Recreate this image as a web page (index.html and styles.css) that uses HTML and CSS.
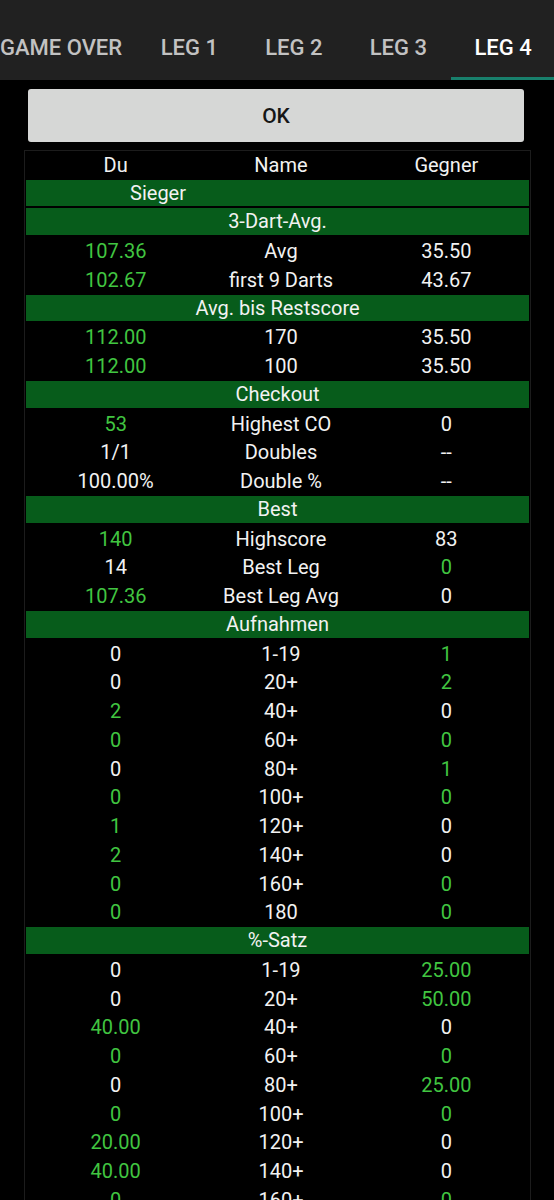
FILE: index.html
```html
<!DOCTYPE html>
<html lang="de">
<head>
  <meta charset="UTF-8">
  <meta name="viewport" content="width=device-width, initial-scale=1.0">
  <title>Statistik</title>
  <link rel="stylesheet" href="styles.css">
</head>
<body>
  <nav class="tabs">
    <div class="tab tab-first">GAME OVER</div>
    <div class="tab">LEG 1</div>
    <div class="tab">LEG 2</div>
    <div class="tab">LEG 3</div>
    <div class="tab tab-active">LEG 4</div>
  </nav>

  <main class="content">
    <button class="btn-ok">OK</button>

    <section class="stats">
      <div class="row head"><span>Du</span><span>Name</span><span>Gegner</span></div>
      <div class="row sec sieger"><span>Sieger</span></div>

      <div class="row sec"><span>3-Dart-Avg.</span></div>
      <div class="row"><span class="win">107.36</span><span>Avg</span><span>35.50</span></div>
      <div class="row"><span class="win">102.67</span><span>first 9 Darts</span><span>43.67</span></div>

      <div class="row sec"><span>Avg. bis Restscore</span></div>
      <div class="row"><span class="win">112.00</span><span>170</span><span>35.50</span></div>
      <div class="row"><span class="win">112.00</span><span>100</span><span>35.50</span></div>

      <div class="row sec"><span>Checkout</span></div>
      <div class="row"><span class="win">53</span><span>Highest CO</span><span>0</span></div>
      <div class="row"><span>1/1</span><span>Doubles</span><span>--</span></div>
      <div class="row"><span>100.00%</span><span>Double %</span><span>--</span></div>

      <div class="row sec"><span>Best</span></div>
      <div class="row"><span class="win">140</span><span>Highscore</span><span>83</span></div>
      <div class="row"><span>14</span><span>Best Leg</span><span class="win">0</span></div>
      <div class="row"><span class="win">107.36</span><span>Best Leg Avg</span><span>0</span></div>

      <div class="row sec"><span>Aufnahmen</span></div>
      <div class="row"><span>0</span><span>1-19</span><span class="win">1</span></div>
      <div class="row"><span>0</span><span>20+</span><span class="win">2</span></div>
      <div class="row"><span class="win">2</span><span>40+</span><span>0</span></div>
      <div class="row"><span class="win">0</span><span>60+</span><span class="win">0</span></div>
      <div class="row"><span>0</span><span>80+</span><span class="win">1</span></div>
      <div class="row"><span class="win">0</span><span>100+</span><span class="win">0</span></div>
      <div class="row"><span class="win">1</span><span>120+</span><span>0</span></div>
      <div class="row"><span class="win">2</span><span>140+</span><span>0</span></div>
      <div class="row"><span class="win">0</span><span>160+</span><span class="win">0</span></div>
      <div class="row"><span class="win">0</span><span>180</span><span class="win">0</span></div>

      <div class="row sec"><span>%-Satz</span></div>
      <div class="row"><span>0</span><span>1-19</span><span class="win">25.00</span></div>
      <div class="row"><span>0</span><span>20+</span><span class="win">50.00</span></div>
      <div class="row"><span class="win">40.00</span><span>40+</span><span>0</span></div>
      <div class="row"><span class="win">0</span><span>60+</span><span class="win">0</span></div>
      <div class="row"><span>0</span><span>80+</span><span class="win">25.00</span></div>
      <div class="row"><span class="win">0</span><span>100+</span><span class="win">0</span></div>
      <div class="row"><span class="win">20.00</span><span>120+</span><span>0</span></div>
      <div class="row"><span class="win">40.00</span><span>140+</span><span>0</span></div>
      <div class="row"><span class="win">0</span><span>160+</span><span class="win">0</span></div>
      <div class="row"><span class="win">0</span><span>180</span><span class="win">0</span></div>
    </section>
  </main>
</body>
</html>
```

FILE: styles.css
```css
/* Reset */
* {
  margin: 0;
  padding: 0;
  box-sizing: border-box;
}

body {
  font-family: Roboto, "Noto Sans", sans-serif;
  background-color: #000;
  color: #f2f2f2;
}

/* Tab-Leiste */
.tabs {
  display: flex;
  height: 80px;
  background-color: #212121;
  overflow: hidden;
}

.tab {
  flex: 0 0 104.5px;
  padding-top: 34px;
  line-height: 28px;
  font-size: 22px;
  font-weight: 500;
  color: #c2c2c2;
  text-align: center;
  white-space: nowrap;
}

.tab-first {
  flex-basis: 135.5px;
  display: flex;
  justify-content: flex-end;
  padding-right: 15px;
}

.tab-active {
  flex-basis: 105px;
  color: #fff;
  border-bottom: 3px solid #18806c;
}

/* Inhalt */
.content {
  padding: 9px 0 0 0;
}

.btn-ok {
  display: block;
  width: 496px;
  height: 53px;
  margin-left: 28px;
  background-color: #d6d7d6;
  border: none;
  border-radius: 3px;
  font-family: Roboto, sans-serif;
  font-size: 21px;
  font-weight: 500;
  color: #161616;
}

.stats {
  margin: 8px 0 0 24px;
  width: 507px;
  border: 1px solid #1c1c1c;
  border-bottom: none;
  padding: 0 1px;
}

.row {
  display: grid;
  grid-template-columns: 1fr 1fr 1fr;
  height: 28.75px;
  line-height: 28.75px;
  padding-left: 7px;
  font-size: 20px;
  text-align: center;
  white-space: nowrap;
}

.head {
  height: 28.5px;
  line-height: 28.5px;
}

.sec {
  display: block;
  padding-left: 0;
  background-color: #075c1b;
  border-bottom: 2px solid #000;
  line-height: 27.5px;
}

.sieger span {
  display: block;
  width: 52.5%;
}

.win {
  color: #41c541;
}
```
